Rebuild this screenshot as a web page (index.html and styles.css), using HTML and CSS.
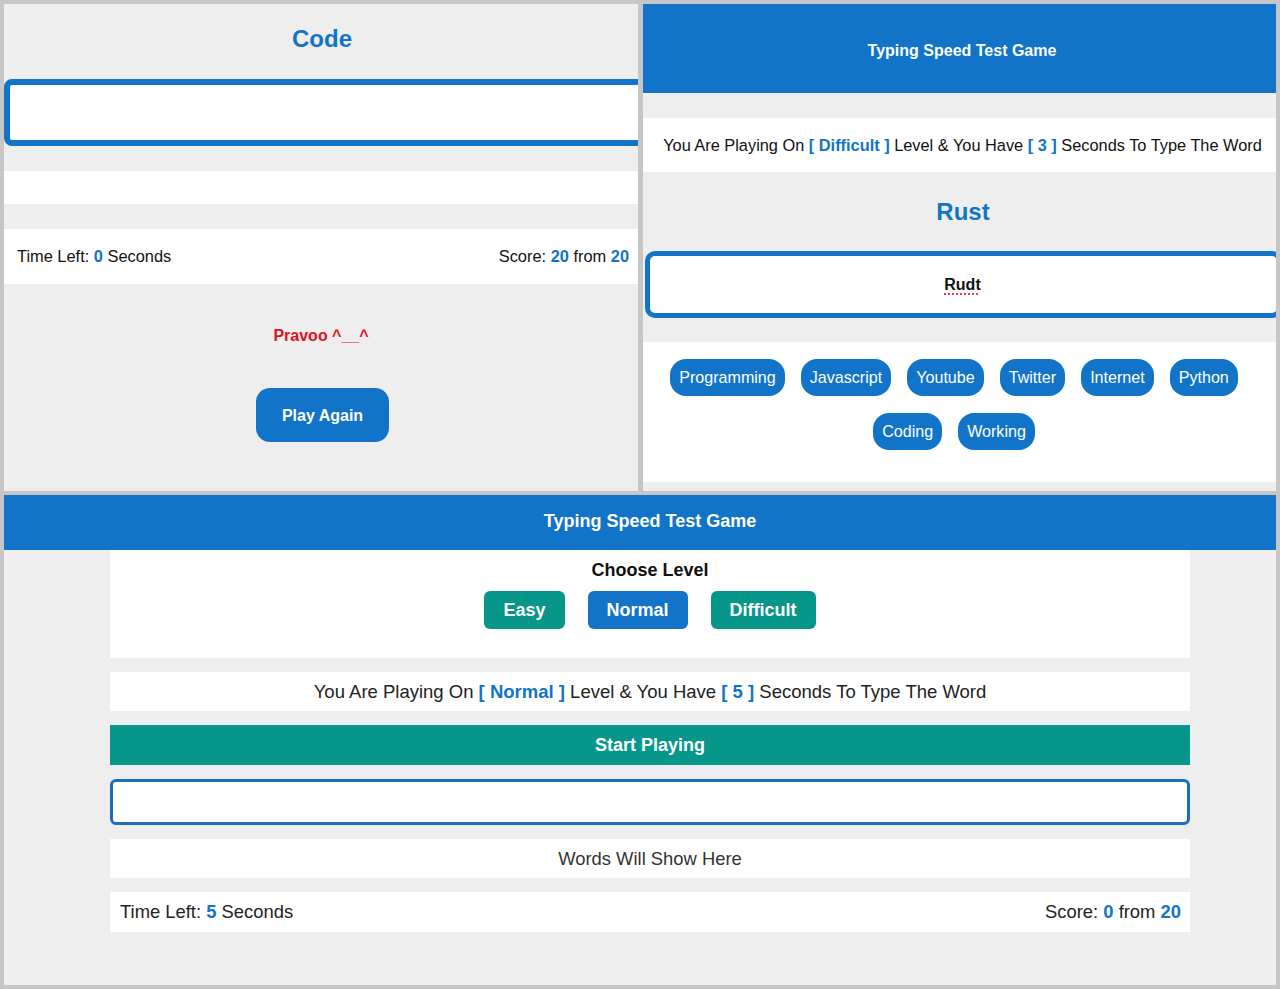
FILE: index.html
```html
<!DOCTYPE html>
<html lang="en">
<head>
<meta charset="utf-8">
<title>Typing Speed Test Game</title>
<link rel="stylesheet" href="styles.css">
</head>
<body>
<div class="collage">
  <div class="top-row">
    <section class="panel">
      <h2 class="word word-end">Code</h2>
      <div class="field field-end"></div>
      <div class="blank-strip"></div>
      <div class="status status-end">
        <span>Time Left: <b class="hl">0</b> Seconds</span>
        <span>Score: <b class="hl">20</b> from <b class="hl">20</b></span>
      </div>
      <p class="result">Pravoo ^__^</p>
      <div class="again-wrap"><button class="again">Play Again</button></div>
    </section>
    <section class="panel">
      <header class="bar bar-sm">Typing Speed Test Game</header>
      <div class="info info-sm">You Are Playing On&nbsp;<b class="hl">[ Difficult ]</b>&nbsp;Level &amp; You Have&nbsp;<b class="hl">[ 3 ]</b>&nbsp;Seconds To Type The Word</div>
      <h2 class="word word-play">Rust</h2>
      <div class="field field-play"><span class="typed">Rudt</span></div>
      <div class="tags">
        <span class="tag">Programming</span>
        <span class="tag">Javascript</span>
        <span class="tag">Youtube</span>
        <span class="tag">Twitter</span>
        <span class="tag">Internet</span>
        <span class="tag">Python</span>
        <span class="tag">Coding</span>
        <span class="tag">Working</span>
      </div>
    </section>
  </div>
  <section class="panel panel-start">
    <header class="bar bar-lg">Typing Speed Test Game</header>
    <div class="setup">
      <div class="levels">
        <div class="levels-title">Choose Level</div>
        <div class="levels-buttons">
          <button class="lvl lvl-teal">Easy</button>
          <button class="lvl lvl-blue">Normal</button>
          <button class="lvl lvl-teal">Difficult</button>
        </div>
      </div>
      <div class="info info-lg">You Are Playing On&nbsp;<b class="hl">[ Normal ]</b>&nbsp;Level &amp; You Have&nbsp;<b class="hl">[ 5 ]</b>&nbsp;Seconds To Type The Word</div>
      <div class="start">Start Playing</div>
      <div class="field field-start"></div>
      <div class="words">Words Will Show Here</div>
      <div class="status status-start">
        <span>Time Left: <b class="hl">5</b> Seconds</span>
        <span>Score: <b class="hl">0</b> from <b class="hl">20</b></span>
      </div>
    </div>
  </section>
</div>
</body>
</html>
```

FILE: styles.css
```css
html, body {
  margin: 0;
  padding: 0;
}
body {
  background: #c6c6c6;
  font-family: "Liberation Sans", Arial, Helvetica, sans-serif;
  color: #111;
}
.collage {
  box-sizing: border-box;
  height: 989px;
  padding: 4px;
  display: flex;
  flex-direction: column;
  gap: 4px;
}
.top-row {
  display: grid;
  grid-template-columns: 634px 633px;
  column-gap: 5px;
  height: 487px;
}
.panel {
  background: #eeeeee;
  overflow: hidden;
}
.panel-start {
  height: 490px;
}
.hl {
  color: #1174c8;
  font-weight: bold;
}

/* words */
.word {
  margin: 0;
  box-sizing: border-box;
  text-align: center;
  color: #1174c8;
  font-size: 24px;
  font-weight: bold;
  line-height: 28px;
}
.word-end {
  height: 75px;
  padding-top: 21px;
  padding-left: 2px;
}
.word-play {
  height: 79px;
  padding-top: 26px;
  padding-left: 7px;
}

/* fields */
.field {
  box-sizing: border-box;
  background: #fff;
}
.field-end {
  height: 67px;
  width: calc(100% + 20px);
  border: 6px solid #1174c8;
  border-radius: 8px;
}
.field-play {
  height: 67px;
  width: calc(100% + 4px);
  margin-left: 2px;
  border: 5px solid #1174c8;
  border-radius: 10px;
  display: flex;
  align-items: center;
  justify-content: center;
  font-size: 16px;
  font-weight: bold;
  color: #111;
  padding-right: 2px;
}
.typed {
  text-decoration: underline dotted #e0443e;
  text-underline-offset: 4px;
  text-decoration-thickness: 2px;
}
.field-start {
  height: 46px;
  border: 3px solid #1c6cbf;
  border-radius: 6px;
}

.blank-strip {
  margin-top: 25px;
  height: 33px;
  background: #fff;
}
.status {
  background: #fff;
  display: flex;
  justify-content: space-between;
  align-items: center;
}
.status-end {
  margin-top: 25px;
  height: 55px;
  padding: 0 9px 0 13px;
  font-size: 16.4px;
}
.result {
  margin: 43px 0 0;
  text-align: center;
  color: #e3101c;
  font-weight: bold;
  font-size: 16px;
  line-height: 18px;
}
.again-wrap {
  margin-top: 43px;
  text-align: center;
  padding-left: 3px;
}
.again {
  height: 54px;
  padding: 2px 26px 0;
  border: none;
  border-radius: 14px;
  background: #1174c8;
  color: #fff;
  font-family: inherit;
  font-size: 16px;
  font-weight: bold;
}

/* header bars */
.bar {
  background: #1174c8;
  color: #fff;
  font-weight: bold;
  display: flex;
  align-items: center;
  justify-content: center;
  box-sizing: border-box;
}
.bar-sm {
  height: 89px;
  font-size: 16px;
  padding-left: 5px;
  padding-top: 4px;
}
.bar-lg {
  height: 55px;
  font-size: 18px;
  padding-left: 20px;
  padding-bottom: 2px;
}

.info {
  background: #fff;
  display: flex;
  align-items: center;
  justify-content: center;
  white-space: nowrap;
}
.info-sm {
  margin-top: 25px;
  height: 54px;
  font-size: 16.35px;
  padding-left: 6px;
}

/* tags */
.tags {
  margin-top: 24px;
  height: 140px;
  box-sizing: border-box;
  background: #fff;
  padding: 17px 22px 0 11px;
  display: flex;
  flex-wrap: wrap;
  justify-content: center;
  align-content: flex-start;
  gap: 17px 16px;
}
.tag {
  background: #1174c8;
  color: #fff;
  font-size: 16.1px;
  line-height: 19px;
  padding: 9px 9px;
  border-radius: 16px;
}

/* start panel */
.setup {
  width: 1080px;
  margin-left: 106px;
  display: flex;
  flex-direction: column;
  gap: 14px;
}
.levels {
  height: 108px;
  box-sizing: border-box;
  padding-top: 10px;
  background: #fff;
  text-align: center;
}
.levels-title {
  font-size: 18px;
  font-weight: bold;
  line-height: 21px;
  color: #111;
}
.levels-buttons {
  margin-top: 10px;
  display: flex;
  justify-content: center;
  gap: 23px;
}
.lvl {
  height: 38px;
  padding: 0 19px;
  border: none;
  border-radius: 6px;
  color: #fff;
  font-family: inherit;
  font-size: 18px;
  font-weight: bold;
}
.lvl-teal {
  background: #07978a;
}
.lvl-blue {
  background: #1174c8;
}
.info-lg {
  height: 39px;
  font-size: 18.5px;
  color: #222;
}
.start {
  height: 40px;
  background: #07978a;
  color: #fff;
  font-size: 18px;
  font-weight: bold;
  display: flex;
  align-items: center;
  justify-content: center;
}
.words {
  height: 39px;
  background: #fff;
  color: #333;
  font-size: 18.4px;
  display: flex;
  align-items: center;
  justify-content: center;
}
.status-start {
  height: 40px;
  padding: 0 9px 0 10px;
  font-size: 18.4px;
  color: #222;
}
```
